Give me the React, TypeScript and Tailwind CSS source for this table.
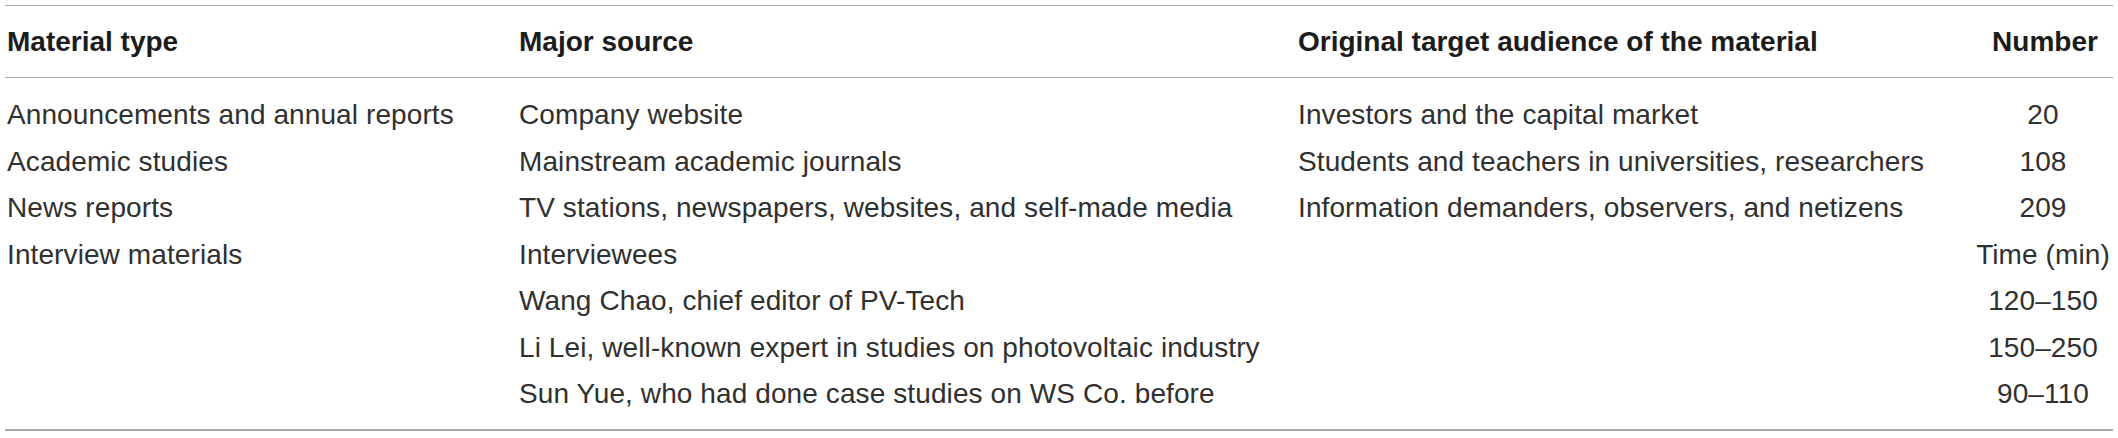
const header = ['Material type', 'Major source', 'Original target audience of the material', 'Number'];

const rows: [string, string, string, string][] = [
  ['Announcements and annual reports', 'Company website', 'Investors and the capital market', '20'],
  ['Academic studies', 'Mainstream academic journals', 'Students and teachers in universities, researchers', '108'],
  ['News reports', 'TV stations, newspapers, websites, and self-made media', 'Information demanders, observers, and netizens', '209'],
  ['Interview materials', 'Interviewees', '', 'Time (min)'],
  ['', 'Wang Chao, chief editor of PV-Tech', '', '120–150'],
  ['', 'Li Lei, well-known expert in studies on photovoltaic industry', '', '150–250'],
  ['', 'Sun Yue, who had done case studies on WS Co. before', '', '90–110'],
];

const cols = 'grid grid-cols-[514px_779px_675px_140px]';

export default function App() {
  return (
    <div className="w-[2118px] h-[438px] bg-white pt-[5px] px-[5px] font-['Liberation_Sans',Arial,sans-serif]">
      <div className="border-t border-[#a8a8a8]">
        <div className={`${cols} h-[72px] items-center border-b border-[#a8a8a8] text-[28px] font-bold text-[#1c1c1c]`}>
          {header.map((h, i) => (
            <div key={i} className={i === 0 ? 'pl-[2px]' : i === 3 ? 'text-center pl-[4px]' : ''}>
              {h}
            </div>
          ))}
        </div>
        <div className="pt-[14px] pb-[11px] border-b-2 border-[#a8a8a8]">
          {rows.map((r, ri) => (
            <div key={ri} className={`${cols} h-[46.5px] items-center text-[28px] tracking-[0.1px] text-[#303030] whitespace-nowrap`}>
              <div className="pl-[2px]">{r[0]}</div>
              <div>{r[1]}</div>
              <div>{r[2]}</div>
              <div className="text-center">{r[3]}</div>
            </div>
          ))}
        </div>
      </div>
    </div>
  );
}
